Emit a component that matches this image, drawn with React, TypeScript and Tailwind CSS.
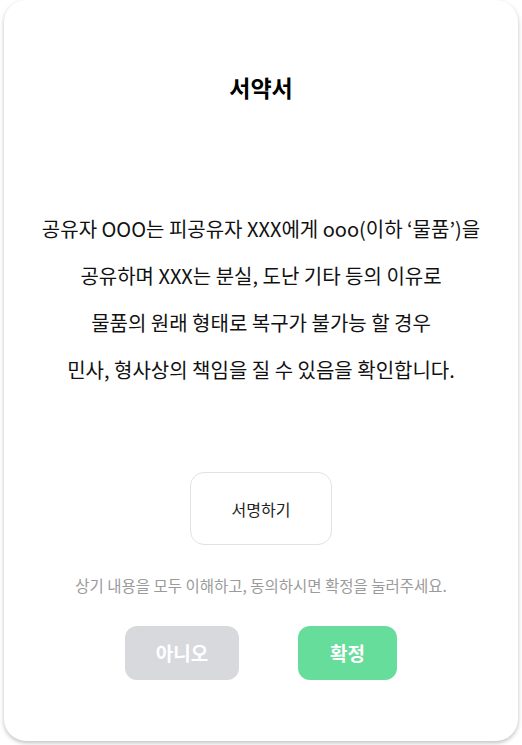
const lines = [
  "공유자 OOO는 피공유자 XXX에게 ooo(이하 ‘물품’)을",
  "공유하며 XXX는 분실, 도난 기타 등의 이유로",
  "물품의 원래 형태로 복구가 불가능 할 경우",
  "민사, 형사상의 책임을 질 수 있음을 확인합니다.",
];

const App = () => {
  return (
    <div className="min-h-[745px] w-full bg-white px-[4px] pb-[4px] font-['Noto_Sans_CJK_KR',sans-serif]">
      <div className="flex h-[741px] flex-col items-center rounded-[22px] bg-white shadow-[0_2px_4px_rgba(0,0,0,0.25)]">
        {/* Title */}
        <h1 className="mt-[72px] text-[23px] font-bold leading-[30px] text-black">
          서약서
        </h1>

        {/* Body */}
        <div className="mt-[103px] flex flex-col items-center text-[20px] leading-[47px] text-[#111]">
          {lines.map((line) => (
            <p key={line}>{line}</p>
          ))}
        </div>

        {/* Sign */}
        <button className="mt-[79px] h-[73px] w-[142px] rounded-[14px] border border-[#e2e2e2] bg-white text-[16px] text-[#222]">
          서명하기
        </button>

        <p className="mt-[30px] text-[15.5px] leading-[20px] text-[#9b9b9b]">
          상기 내용을 모두 이해하고, 동의하시면 확정을 눌러주세요.
        </p>

        {/* Actions */}
        <div className="mt-[31px] flex gap-[59px]">
          <button className="h-[54px] w-[114px] rounded-[12px] bg-[#d8d9dd] text-[19px] font-bold text-white">
            아니오
          </button>
          <button className="h-[54px] w-[99px] rounded-[12px] bg-[#66dd9b] text-[19px] font-bold text-white">
            확정
          </button>
        </div>
      </div>
    </div>
  );
};

export default App;
